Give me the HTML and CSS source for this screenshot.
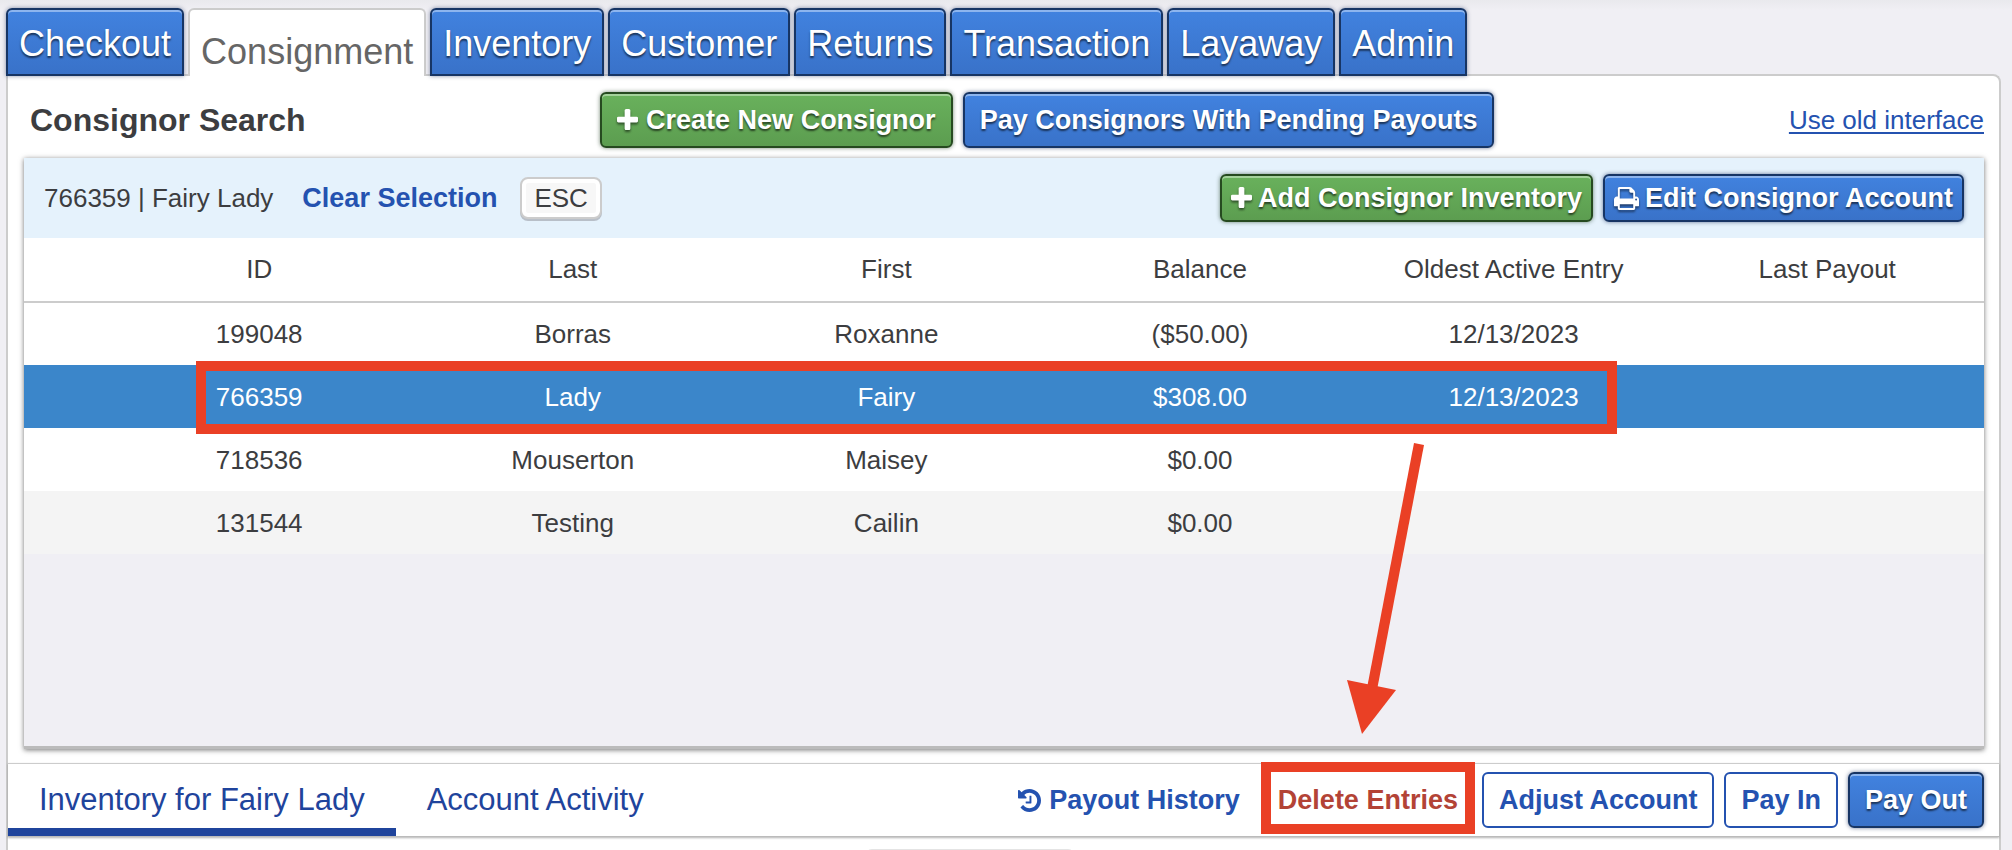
FILE: index.html
```html
<!DOCTYPE html>
<html lang="en">
<head>
    <meta charset="UTF-8">
    <meta name="viewport" content="width=device-width, initial-scale=1.0">
    <title>Consignor Search</title>
    <link rel="stylesheet" href="styles.css">
</head>
<body>

    <nav class="tabs">
        <button type="button" class="tab">Checkout</button>
        <button type="button" class="tab active">Consignment</button>
        <button type="button" class="tab">Inventory</button>
        <button type="button" class="tab">Customer</button>
        <button type="button" class="tab">Returns</button>
        <button type="button" class="tab">Transaction</button>
        <button type="button" class="tab">Layaway</button>
        <button type="button" class="tab">Admin</button>
    </nav>

    <main class="panel">
        <header class="panel-header">
            <h1>Consignor Search</h1>
            <div class="button-group">
                <button type="button" class="btn green">
                    <svg class="icon" width="21" height="27" viewBox="192 0 1408 1792"><path d="M1600 736v192q0 40-28 68t-68 28h-416v416q0 40-28 68t-68 28h-192q-40 0-68-28t-28-68v-416h-416q-40 0-68-28t-28-68v-192q0-40 28-68t68-28h416v-416q0-40 28-68t68-28h192q40 0 68 28t28 68v416h416q40 0 68 28t28 68z"/></svg>
                    Create New Consignor
                </button>
                <button type="button" class="btn blue">Pay Consignors With Pending Payouts</button>
            </div>
            <a class="old-link" href="#">Use old interface</a>
        </header>

        <section class="results">
            <div class="selection">
                <span>766359 | Fairy Lady</span>
                <button type="button" class="clear">Clear Selection</button>
                <kbd>ESC</kbd>
                <div class="button-group selection-actions">
                    <button type="button" class="btn small green">
                        <svg class="icon" width="21" height="27" viewBox="192 0 1408 1792"><path d="M1600 736v192q0 40-28 68t-68 28h-416v416q0 40-28 68t-68 28h-192q-40 0-68-28t-28-68v-416h-416q-40 0-68-28t-28-68v-192q0-40 28-68t68-28h416v-416q0-40 28-68t68-28h192q40 0 68 28t28 68v416h416q40 0 68 28t28 68z"/></svg>
                        Add Consignor Inventory
                    </button>
                    <button type="button" class="btn small blue">
                        <svg class="icon" width="25" height="27" viewBox="64 0 1664 1792"><path d="M448 1536h896v-256h-896v256zm0-640h896v-384h-160q-40 0-68-28t-28-68v-160h-640v640zm1152 64q0-26-19-45t-45-19-45 19-19 45 19 45 45 19 45-19 19-45zm128 0v416q0 13-9.500 22.500t-22.500 9.500h-224v160q0 40-28 68t-68 28h-960q-40 0-68-28t-28-68v-160h-224q-13 0-22.500-9.500t-9.500-22.500v-416q0-79 56.500-135.500t135.500-56.500h64v-544q0-40 28-68t68-28h672q40 0 88 20t76 48l152 152q28 28 48 76t20 88v256h64q79 0 135.500 56.500t56.500 135.500z"/></svg>
                        Edit Consignor Account
                    </button>
                </div>
            </div>
            <table>
                <thead>
                    <tr>
                        <td class="spacer"></td>
                        <th>ID</th>
                        <th>Last</th>
                        <th>First</th>
                        <th>Balance</th>
                        <th>Oldest Active Entry</th>
                        <th>Last Payout</th>
                    </tr>
                </thead>
                <tbody>
                    <tr>
                        <td></td>
                        <td>199048</td>
                        <td>Borras</td>
                        <td>Roxanne</td>
                        <td>($50.00)</td>
                        <td>12/13/2023</td>
                        <td></td>
                    </tr>
                    <tr class="selected">
                        <td></td>
                        <td>766359</td>
                        <td>Lady</td>
                        <td>Fairy</td>
                        <td>$308.00</td>
                        <td>12/13/2023</td>
                        <td></td>
                    </tr>
                    <tr>
                        <td></td>
                        <td>718536</td>
                        <td>Mouserton</td>
                        <td>Maisey</td>
                        <td>$0.00</td>
                        <td></td>
                        <td></td>
                    </tr>
                    <tr class="shaded">
                        <td></td>
                        <td>131544</td>
                        <td>Testing</td>
                        <td>Cailin</td>
                        <td>$0.00</td>
                        <td></td>
                        <td></td>
                    </tr>
                </tbody>
            </table>
            <!-- callouts drawn over the list -->
            <div class="callout row-callout"></div>
            <svg class="arrow" width="74" height="292" viewBox="0 0 74 292">
                <path d="M67 0l10 2L30 247l-10-2z"/>
                <path d="M0 237l49 10L15 291z"/>
            </svg>
        </section>

        <div class="detail-bar">
            <button type="button" class="detail-tab active">Inventory for Fairy Lady</button>
            <button type="button" class="detail-tab">Account Activity</button>
            <div class="button-group detail-actions">
                <button type="button" class="btn text">
                    <svg class="icon" width="23" height="27" viewBox="128 0 1536 1792"><path d="M1664 896q0 156-61 298t-164 245-245 164-298 61q-172 0-327-72.500t-264-204.500q-7-10-6.500-22.500t8.500-20.500l137-138q10-9 25-9 16 2 23 12 73 95 179 147t225 52q104 0 198.500-40.500t163.500-109.500 109.500-163.500 40.500-198.500-40.500-198.500-109.500-163.500-163.500-109.500-198.500-40.500q-98 0-188 35.500t-160 101.500l137 138q31 30 14 69-17 40-59 40h-448q-26 0-45-19t-19-45v-448q0-42 40-59 39-17 69 14l130 129q107-101 244.500-156.500t284.500-55.500q156 0 298 61t245 164 164 245 61 298zm-640-288v448q0 14-9 23t-23 9h-320q-14 0-23-9t-9-23v-64q0-14 9-23t23-9h224v-352q0-14 9-23t23-9h64q14 0 23 9t9 23z"/></svg>
                    Payout History
                </button>
                <button type="button" class="btn text danger">Delete Entries<span class="callout delete-callout"></span></button>
                <button type="button" class="btn outline">Adjust Account</button>
                <button type="button" class="btn outline">Pay In</button>
                <button type="button" class="btn blue">Pay Out</button>
            </div>
        </div>
        <div class="detail-body">
            <div class="detail-card"></div>
        </div>
    </main>

</body>
</html>
```

FILE: styles.css
```css
* {
    box-sizing: border-box;
}
body {
    font-family: "Liberation Sans", Arial, sans-serif;
    font-size: 26px;
    line-height: 30px;
    margin: 0;
    padding: 8px 11px 0 6px;
    height: 100vh;
    overflow: hidden;
    color: #3c3d40;
    background: linear-gradient(#e9e9ed, #f0eff4 10px);
    display: flex;
    flex-direction: column;
}
button {
    font-family: inherit;
    white-space: nowrap;
    cursor: pointer;
}

/* main tabs */
.tabs {
    display: flex;
    gap: 4px;
    position: relative;
    z-index: 1;
}
.tab {
    height: 68px;
    padding: 3px 11px 0;
    font-size: 36px;
    line-height: 40px;
    color: white;
    text-shadow: 0 2px 2px rgba(0, 0, 0, 0.6);
    border: 2px solid #173564;
    border-radius: 6px 6px 0 0;
    background: linear-gradient(#4182df, #3972c9);
    box-shadow: 0 0 4px rgba(20, 40, 90, 0.5), inset 0 2px 0 #8db5ee;
}
.tab.active {
    color: #666;
    padding-top: 17px;
    text-shadow: none;
    border-color: #ccc;
    border-bottom: 0;
    background: white;
    box-shadow: none;
}

.panel {
    flex: 1;
    min-height: 0;
    margin-top: -2px;
    display: flex;
    flex-direction: column;
    background-color: white;
    border: 2px solid #ccc;
    border-bottom: 0;
    border-top-right-radius: 8px;
}
.panel-header {
    display: flex;
    justify-content: space-between;
    align-items: center;
    padding: 16px 15px 10px 22px;
}
h1 {
    margin: 0;
    font-size: 32px;
    line-height: 36px;
}
.old-link {
    color: #2452b0;
    text-underline-offset: 3px;
    text-decoration-thickness: 2px;
}

/* buttons */
.button-group {
    display: flex;
    align-items: center;
    gap: 10px;
}
.btn {
    display: flex;
    align-items: center;
    gap: 8px;
    height: 56px;
    padding: 0 15px;
    font-size: 27px;
    font-weight: bold;
    border: 2px solid #173564;
    border-radius: 6px;
}
.btn.small {
    height: 48px;
    padding: 0 9px;
    gap: 6px;
}
.icon {
    fill: currentColor;
    flex: none;
}
.blue, .green {
    color: white;
    text-shadow: 0 2px 2px rgba(0, 0, 0, 0.6);
}
.blue .icon, .green .icon {
    filter: drop-shadow(0 2px 1px rgba(0, 0, 0, 0.5));
}
.blue {
    background: linear-gradient(#4182df, #3972c9);
    box-shadow: 0 0 4px rgba(20, 40, 90, 0.6), inset 0 2px 0 #8db5ee;
}
.green {
    border-color: #264a20;
    background: linear-gradient(#69b15c, #5c9d50);
    box-shadow: 0 0 4px rgba(30, 60, 30, 0.6), inset 0 2px 0 #a4d29b;
}
.btn.outline {
    color: #2452b0;
    border-color: #2452b0;
    background-color: white;
}
.btn.text {
    position: relative;
    padding: 0 14px;
    color: #2452b0;
    border: 0;
    background: none;
}
.btn.danger {
    color: #b34336;
}

/* consignor list */
.results {
    flex: 1;
    position: relative;
    margin: 0 15px 14px 16px;
    background-color: #f0eff4;
    border-bottom: 3px solid #bbb;
    box-shadow: 0 1px 5px rgba(0, 0, 0, 0.55);
}
.selection {
    display: flex;
    align-items: center;
    height: 80px;
    padding: 0 20px;
    background-color: #e5f2fc;
}
.clear {
    margin: 0 23px 0 29px;
    padding: 0;
    font-size: 27px;
    font-weight: bold;
    color: #2452b0;
    border: 0;
    background: none;
}
kbd {
    font-family: inherit;
    padding: 4px 12px;
    border: 2px solid #ccc;
    border-radius: 8px;
    background-color: #f7f7f7;
    box-shadow: 0 2px 0 #b8bfc8, inset 0 0 0 4px white;
}
.selection-actions {
    margin-left: auto;
}
table {
    width: 100%;
    table-layout: fixed;
    border-collapse: collapse;
    background-color: white;
}
.spacer {
    width: 4%;
}
th, td {
    height: 63px;
    padding: 0;
    font-weight: normal;
    text-align: center;
}
th {
    height: 64px;
    padding-bottom: 2px;
}
thead tr {
    border-bottom: 2px solid #ccc;
}
.selected {
    color: white;
    background-color: #3b86ca;
}
.shaded {
    background-color: #f4f4f4;
}

/* callouts */
.callout {
    position: absolute;
    border: 10px solid #ea4025;
    pointer-events: none;
}
.row-callout {
    top: 203px;
    left: 172px;
    right: 367px;
    height: 73px;
}
.delete-callout {
    top: -10px;
    bottom: -6px;
    left: -3px;
    right: -3px;
}
.arrow {
    position: absolute;
    top: 285px;
    right: 563px;
    fill: #ea4025;
    overflow: visible;
}

/* detail bar under the list */
.detail-bar {
    display: flex;
    height: 74px;
    padding-right: 15px;
    border-top: 1px solid #ccc;
    border-bottom: 1px solid #bbb;
    box-shadow: 0 1px 2px rgba(0, 0, 0, 0.3);
}
.detail-tab {
    padding: 8px 31px 0;
    font-size: 31px;
    color: #1f449c;
    border: 0;
    border-bottom: 8px solid transparent;
    background: none;
}
.detail-tab.active {
    border-color: #1f449c;
}
.detail-actions {
    margin-left: auto;
}
.detail-body {
    flex: none;
    height: 13px;
    padding-top: 12px;
    overflow: hidden;
}
.detail-card {
    width: 212px;
    height: 40px;
    margin-left: 43%;
    border: 1px solid #e4e4e4;
    border-radius: 8px;
}
```
